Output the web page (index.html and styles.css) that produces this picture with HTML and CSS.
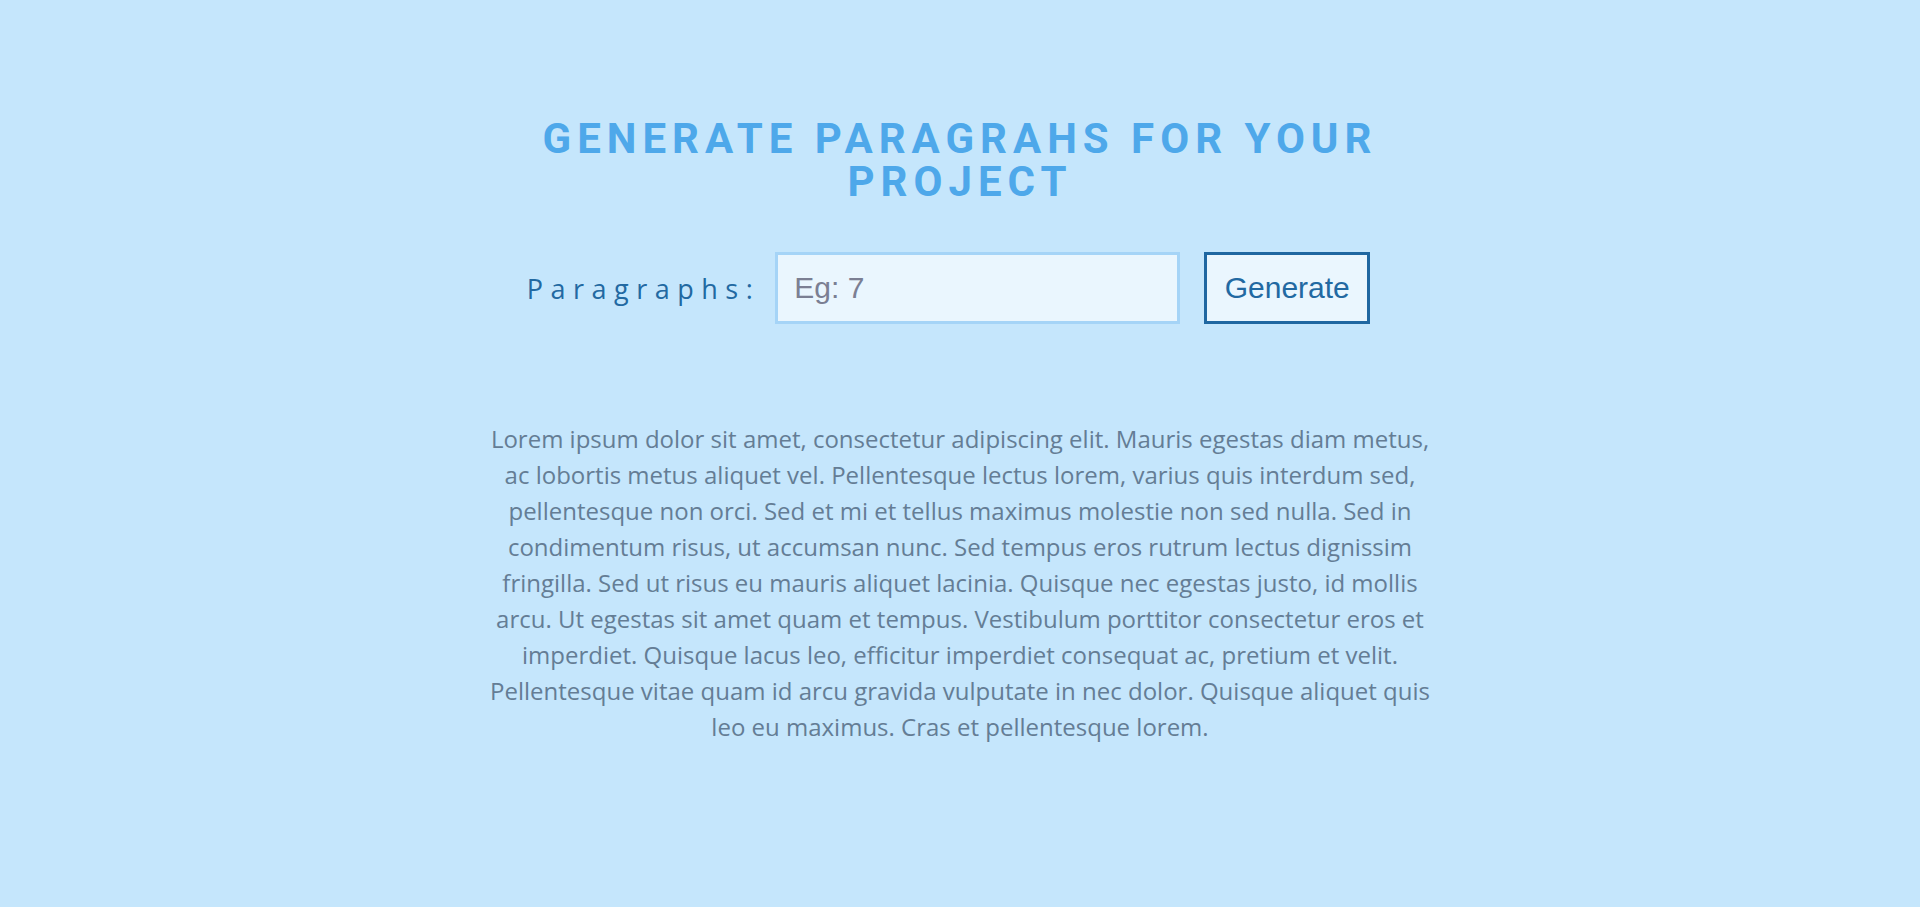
FILE: index.html
```html
<!DOCTYPE html>
<html lang="en">
<head>
<meta charset="utf-8">
<title>Paragraph Generator</title>
<link rel="stylesheet" href="styles.css">
</head>
<body>
<main class="page">
  <h1 class="title">Generate paragrahs for your project</h1>
  <form class="form-row">
    <label class="label" for="count">Paragraphs:</label>
    <input class="count-input" id="count" type="text" placeholder="Eg: 7">
    <button class="generate-btn" type="button">Generate</button>
  </form>
  <p class="lorem">Lorem ipsum dolor sit amet, consectetur adipiscing elit. Mauris egestas diam metus, ac lobortis metus aliquet vel. Pellentesque lectus lorem, varius quis interdum sed, pellentesque non orci. Sed et mi et tellus maximus molestie non sed nulla. Sed in condimentum risus, ut accumsan nunc. Sed tempus eros rutrum lectus dignissim fringilla. Sed ut risus eu mauris aliquet lacinia. Quisque nec egestas justo, id mollis arcu. Ut egestas sit amet quam et tempus. Vestibulum porttitor consectetur eros et imperdiet. Quisque lacus leo, efficitur imperdiet consequat ac, pretium et velit. Pellentesque vitae quam id arcu gravida vulputate in nec dolor. Quisque aliquet quis leo eu maximus. Cras et pellentesque lorem.</p>
</main>
</body>
</html>
```
FILE: styles.css
```css
html, body {
  margin: 0;
  padding: 0;
}
body {
  background: #c5e6fc;
  min-height: 907px;
  font-family: "Open Sans", "Liberation Sans", sans-serif;
}
.page {
  padding-top: 118px;
  display: flex;
  flex-direction: column;
  align-items: center;
}
.title {
  margin: 0;
  width: 900px;
  text-align: center;
  font-family: Roboto, "Liberation Sans", sans-serif;
  font-weight: 700;
  font-size: 42px;
  line-height: 42.5px;
  letter-spacing: 6px;
  text-transform: uppercase;
  color: #4ea8ea;
}
.form-row {
  margin: 49px 0 0;
  padding-right: 23px;
  display: flex;
  align-items: center;
}
.label {
  font-family: "Open Sans", sans-serif;
  font-size: 27px;
  letter-spacing: 7.5px;
  color: #2269a2;
  margin-right: 15px;
}
.count-input {
  box-sizing: border-box;
  width: 405px;
  height: 72px;
  margin: 0 24px 0 0;
  padding: 0 16px;
  border: 3px solid #a5d4f7;
  background: #eaf6fe;
  font-family: "Liberation Sans", Arial, sans-serif;
  font-size: 30px;
  color: #333;
  outline: none;
}
.count-input::placeholder {
  color: #7b7f93;
}
.generate-btn {
  box-sizing: border-box;
  width: 166px;
  height: 72px;
  margin: 0;
  padding: 0;
  border: 3px solid #1f67a1;
  background: #eaf6fe;
  font-family: "Liberation Sans", Arial, sans-serif;
  font-size: 30px;
  color: #2269a2;
  cursor: pointer;
}
.lorem {
  margin: 97px 0 0;
  max-width: 960px;
  text-align: center;
  font-family: "Open Sans", sans-serif;
  font-size: 24px;
  line-height: 36px;
  color: #647d95;
}
```
